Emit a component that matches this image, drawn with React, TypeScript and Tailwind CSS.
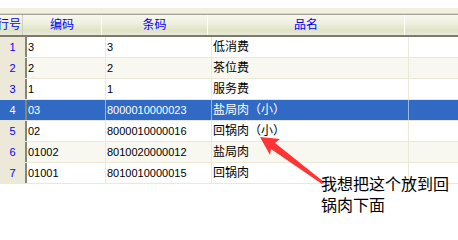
import React from "react";

const rows = [
  { n: "1", code: "3", bar: "3", name: "低消费" },
  { n: "2", code: "2", bar: "2", name: "茶位费" },
  { n: "3", code: "1", bar: "1", name: "服务费" },
  { n: "4", code: "03", bar: "8000010000023", name: "盐局肉（小）", sel: true },
  { n: "5", code: "02", bar: "8000010000016", name: "回锅肉（小）" },
  { n: "6", code: "01002", bar: "8010020000012", name: "盐局肉" },
  { n: "7", code: "01001", bar: "8010010000015", name: "回锅肉" },
];

const font = { fontFamily: '"Liberation Sans", "Noto Sans CJK SC", sans-serif' };

export default function App() {
  return (
    <div className="relative w-[458px] h-[240px] bg-white overflow-hidden" style={font}>
      <div className="h-[8px] bg-white" />
      <div className="h-[6px] bg-[#f1efe2] border-b border-[#d8d5c4]" />
      {/* header */}
      <div className="flex h-[23px] border-t border-[#a6a495] border-b-2 border-b-[#7d7b6c] bg-[linear-gradient(#f7f7ee,#eef0dc_45%,#dfe3c6_75%,#e9ead9)] text-[12px] text-[#0000ff] leading-[20px]">
        <div className="w-[27px] border-r border-[#d0cfbd] pl-[0px] -ml-[4px] text-center">行号</div>
        <div className="w-[79px] border-r border-[#ffffff] text-center">编码</div>
        <div className="w-[106px] border-r border-[#ffffff] text-center">条码</div>
        <div className="w-[197px] border-r border-[#ffffff] text-center">品名</div>
        <div className="flex-1" />
      </div>
      {rows.map((r, i) => (
        <div
          key={r.n}
          className={
            "flex h-[21px] border-b text-[12px] leading-[20px] " +
            (r.sel
              ? "bg-[#316ac5] text-white border-[#e8e6d8]"
              : i % 2 === 1
              ? "bg-[#f8f8f0] text-black border-[#ebe8d8]"
              : "bg-white text-black border-[#ebe8d8]")
          }
        >
          <div
            className={
              "w-[27px] border-r-2 border-r-[#858578] text-center text-[11px] " +
              (r.sel ? "bg-[#316ac5] text-white" : "bg-[#ece9d8] text-[#0000ff]")
            }
          >
            {r.n}
          </div>
          <div className={"w-[79px] pl-[1px] text-[11px] border-r " + (r.sel ? "border-[#9fb6df]" : "border-[#ebe8d8]")}>
            {r.code}
          </div>
          <div className={"w-[106px] pl-[1px] text-[11px] border-r " + (r.sel ? "border-[#9fb6df]" : "border-[#ebe8d8]")}>
            {r.bar}
          </div>
          <div className={"w-[197px] pl-[1px] border-r " + (r.sel ? "border-[#9fb6df]" : "border-[#ebe8d8]")}>
            {r.name}
          </div>
          <div className="flex-1" />
        </div>
      ))}
      <svg className="absolute left-0 top-0" width="458" height="240" viewBox="0 0 458 240">
        <polygon
          points="260,137 280,139 275,143 324,182 322,184 271,149 270,155"
          fill="#ff3333"
        />
      </svg>
      <div className="absolute left-[321px] top-[174px] w-[132px] text-[16px] leading-[21px] text-black">
        我想把这个放到回锅肉下面
      </div>
    </div>
  );
}
